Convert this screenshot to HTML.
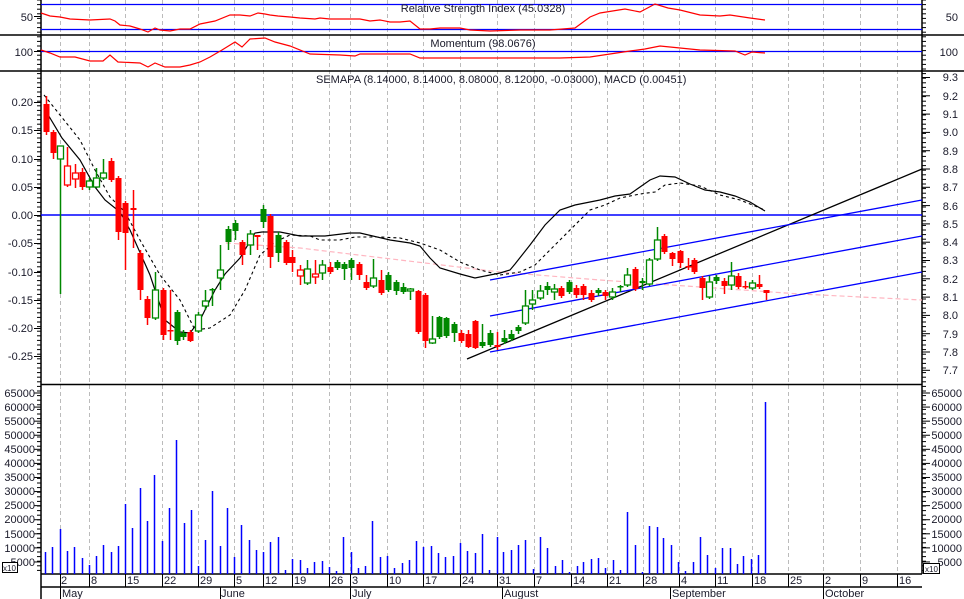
<!DOCTYPE html>
<html><head><meta charset="utf-8"><style>
html,body{margin:0;padding:0;background:#fff;width:964px;height:599px;overflow:hidden}
svg{display:block}
text{font-family:"Liberation Sans",sans-serif;font-size:11px;fill:#1a1a2a}
</style></head><body>
<svg id="s" width="964" height="599" xmlns="http://www.w3.org/2000/svg">
<g id="grid"></g>
<line x1="0" y1="35" x2="964" y2="35" stroke="#000" stroke-width="1.5"/>
<line x1="0" y1="71" x2="964" y2="71" stroke="#000" stroke-width="1.5"/>
<line x1="41" y1="384.5" x2="922" y2="384.5" stroke="#000" stroke-width="1.5"/>
<line x1="41" y1="574" x2="922" y2="574" stroke="#000" stroke-width="1.5"/>
<line x1="41" y1="587" x2="922" y2="587" stroke="#000" stroke-width="1.5"/>
<line x1="41" y1="0" x2="41" y2="599" stroke="#000" stroke-width="1.5"/>
<line x1="922" y1="0" x2="922" y2="574" stroke="#000" stroke-width="1.5"/>
<g id="ticks" stroke="#000" stroke-width="1"></g>
<line x1="41" y1="4.5" x2="922" y2="4.5" stroke="#00f" stroke-width="1.2"/>
<line x1="41" y1="29.5" x2="922" y2="29.5" stroke="#00f" stroke-width="1.2"/>
<line x1="41" y1="51.5" x2="922" y2="51.5" stroke="#00f" stroke-width="1.2"/>
<line x1="41" y1="215" x2="922" y2="215" stroke="#00f" stroke-width="1.5"/>
<polyline fill="none" stroke="#f00" stroke-width="1.2" points="41,13 50,16 60,17 70,19 90,20 110,19 115,21 120,25 130,26 140,29 148,32 155,28 160,30 170,31 180,29 190,29 200,24 215,21 230,15 240,15 250,16 258,13 265,14 270,15 278,16 290,17 300,18 315,19 320,18 330,19 360,19 370,21 380,20 390,22 400,22 410,21 420,29 430,29 440,28 460,28 470,30 490,31 520,30 550,30 575,28 590,17 600,13 625,9 640,12 655,4 668,8 680,10 700,15 720,16 730,15 750,18 765,20"/>
<polyline fill="none" stroke="#f00" stroke-width="1.2" points="41,50 50,53 60,57 75,57 90,61 103,61 110,55 118,62 140,63 148,67 155,63 165,67 180,67 190,65 200,62 210,57 222,50 235,42 242,47 250,39 265,38 275,42 290,46 310,54 340,55 355,56 360,54 380,54 410,54 420,58 440,58 470,58 500,58 530,58 560,58 590,57 610,54 630,51 645,49 660,46 680,48 700,50 735,51 745,55 752,52 765,53"/>
<polyline fill="none" stroke="#ffb6c1" stroke-width="1.2" stroke-dasharray="5,3" points="226,243 300,248 400,260 500,272 600,280 700,287 800,294 922,300"/>
<polyline fill="none" stroke="#000" stroke-width="1.2" points="44,108 62,138 80,160 95,187 105,200 120,212 130,230 150,275 165,320 180,332 190,333 200,320 215,290 225,274 240,258 255,233 262,232 280,232 300,236 325,236 350,233 360,233 390,240 410,243 420,246 430,258 440,268 460,274 475,278 500,273 510,270 515,264 530,245 545,225 560,210 575,205 600,200 615,196 630,194 650,180 660,176 675,177 690,184 705,190 720,192 735,196 750,202 765,211"/>
<polyline fill="none" stroke="#000" stroke-width="1.1" stroke-dasharray="3,3" points="44,95 60,115 80,140 95,170 110,197 125,212 140,240 160,275 180,300 195,330 210,328 230,315 245,290 260,255 275,242 290,235 310,236 320,240 340,240 355,237 380,237 400,238 420,243 440,250 460,262 480,270 500,275 520,272 535,265 545,255 560,240 575,225 590,210 605,205 620,198 640,194 655,192 665,185 680,183 700,186 720,195 740,200 765,210"/>
<line x1="467" y1="359" x2="922" y2="169" stroke="#000" stroke-width="1.3"/>
<line x1="490" y1="280" x2="922" y2="200" stroke="#00f" stroke-width="1.3"/>
<line x1="490" y1="316" x2="922" y2="236" stroke="#00f" stroke-width="1.3"/>
<line x1="490" y1="352" x2="922" y2="272" stroke="#00f" stroke-width="1.3"/>
<g id="candles"></g>
<g id="vol" stroke="#00f" stroke-width="1.5"></g>
<text x="483" y="12" text-anchor="middle">Relative Strength Index (45.0328)</text>
<text x="483" y="47" text-anchor="middle">Momentum (98.0676)</text>
<text x="316" y="83">SEMAPA (8.14000, 8.14000, 8.08000, 8.12000, -0.03000), MACD (0.00451)</text>
<g text-anchor="end">
<text x="33" y="21">50</text><text x="33" y="56">100</text>
<text x="33" y="106">0.20</text><text x="33" y="134">0.15</text><text x="33" y="163">0.10</text><text x="33" y="191">0.05</text><text x="33" y="219">0.00</text><text x="33" y="247">-0.05</text><text x="33" y="276">-0.10</text><text x="33" y="304">-0.15</text><text x="33" y="332">-0.20</text><text x="33" y="360">-0.25</text>
<text x="35" y="397">65000</text><text x="35" y="411">60000</text><text x="35" y="425">55000</text><text x="35" y="439">50000</text><text x="35" y="453">45000</text><text x="35" y="467">40000</text><text x="35" y="481">35000</text><text x="35" y="495">30000</text><text x="35" y="509">25000</text><text x="35" y="523">20000</text><text x="35" y="538">15000</text><text x="35" y="552">10000</text><text x="35" y="566">5000</text>
</g>
<g text-anchor="end">
<text x="958" y="21">50</text><text x="958" y="56">100</text>
<text x="958" y="81">9.3</text><text x="958" y="100">9.2</text><text x="958" y="118">9.1</text><text x="958" y="136">9.0</text><text x="958" y="155">8.9</text><text x="958" y="173">8.8</text><text x="958" y="191">8.7</text><text x="958" y="210">8.6</text><text x="958" y="228">8.5</text><text x="958" y="246">8.4</text><text x="958" y="264">8.3</text><text x="958" y="283">8.2</text><text x="958" y="301">8.1</text><text x="958" y="319">8.0</text><text x="958" y="338">7.9</text><text x="958" y="356">7.8</text><text x="958" y="374">7.7</text>
<text x="962" y="397">65000</text><text x="962" y="411">60000</text><text x="962" y="425">55000</text><text x="962" y="439">50000</text><text x="962" y="453">45000</text><text x="962" y="467">40000</text><text x="962" y="481">35000</text><text x="962" y="495">30000</text><text x="962" y="509">25000</text><text x="962" y="523">20000</text><text x="962" y="538">15000</text><text x="962" y="552">10000</text><text x="962" y="566">5000</text>
</g>
<rect x="2.5" y="562.5" width="15" height="10" fill="#fff" stroke="#000"/><text x="3" y="571" style="font-size:8px">x10</text>
<rect x="923.5" y="563.5" width="16" height="10" fill="#fff" stroke="#000"/><text x="925" y="572" style="font-size:8px">x10</text>
<g>
<text x="61" y="584">2</text><text x="91" y="584">8</text><text x="127" y="584">15</text><text x="164" y="584">22</text><text x="200" y="584">29</text><text x="236" y="584">5</text><text x="265" y="584">12</text><text x="294" y="584">19</text><text x="331" y="584">26</text><text x="352" y="584">3</text><text x="389" y="584">10</text><text x="425" y="584">17</text><text x="462" y="584">24</text><text x="499" y="584">31</text><text x="536" y="584">7</text><text x="573" y="584">14</text><text x="609" y="584">21</text><text x="645" y="584">28</text><text x="681" y="584">4</text><text x="717" y="584">11</text><text x="754" y="584">18</text><text x="790" y="584">25</text><text x="825" y="584">2</text><text x="862" y="584">9</text><text x="899" y="584">16</text>
<text x="62" y="597">May</text><text x="221" y="597">June</text><text x="352" y="597">July</text><text x="504" y="597">August</text><text x="672" y="597">September</text><text x="825" y="597">October</text>
</g>
</svg>
<script>
var NS="http://www.w3.org/2000/svg";
function el(p,t,a){var e=document.createElementNS(NS,t);for(var k in a)e.setAttribute(k,a[k]);document.getElementById(p).appendChild(e);return e;}
var gx=[60,89,125,162,198,234,263,292,329,350,387,423,460,497,534,571,607,643,679,715,752,788,823,860,897];
gx.forEach(function(x){el("grid","line",{x1:x+.5,y1:0,x2:x+.5,y2:574,stroke:"#bbb","stroke-dasharray":"4,3"});
el("ticks","line",{x1:x+.5,y1:574,x2:x+.5,y2:587});});
[60,220,350,502,670,823].forEach(function(x){el("ticks","line",{x1:x+.5,y1:587,x2:x+.5,y2:599});});
for(var y=0;y<574;y+=4.6){el("ticks","line",{x1:37,y1:y,x2:41,y2:y});el("ticks","line",{x1:922,y1:y,x2:926,y2:y});}
[16,51,102,130,159,187,215,243,272,300,328,356].forEach(function(y){el("ticks","line",{x1:34,y1:y+.5,x2:41,y2:y+.5});});
for(var y=77;y<383;y+=18.3)el("ticks","line",{x1:922,y1:y+.5,x2:930,y2:y+.5});
for(var y=393;y<570;y+=14.08){el("ticks","line",{x1:34,y1:y,x2:41,y2:y});el("ticks","line",{x1:922,y1:y,x2:930,y2:y});}
var C=[[46,104,132,96,135,"r"],[53,132,153,130,159,"r"],[60,146,159,146,294,"gh"],[67,166,185,147,187,"rh"],[75,173,179,164,188,"rh"],[82,172,187,168,190,"r"],[89,181,187,178,190,"gh"],[96,178,187,168,188,"gh"],[103,173,178,159,180,"gh"],[111,161,180,158,182,"r"],[118,178,232,176,240,"r"],[125,203,233,201,270,"r"],[133,208,210,190,248,"r"],[140,253,290,250,300,"r"],[147,299,318,296,325,"r"],[155,290,318,272,320,"gh"],[163,290,335,288,340,"r"],[170,330,331,290,340,"r"],[177,312,341,310,345,"g"],[183,333,337,330,340,"g"],[190,332,341,330,342,"r"],[198,315,331,312,333,"gh"],[205,301,306,290,310,"gh"],[212,289,290,288,306,"g"],[220,270,278,245,290,"gh"],[228,229,242,226,250,"g"],[235,223,231,220,240,"g"],[242,242,255,240,265,"r"],[250,234,245,230,255,"gh"],[257,235,237,235,250,"r"],[263,209,222,205,228,"g"],[270,216,257,214,268,"r"],[278,235,253,232,262,"g"],[286,242,263,240,265,"r"],[292,257,263,250,272,"r"],[300,270,276,265,285,"rh"],[307,269,283,260,285,"gh"],[315,274,277,260,284,"rh"],[322,265,273,260,280,"gh"],[330,267,272,262,274,"r"],[337,262,268,260,270,"g"],[344,264,269,262,280,"g"],[351,260,268,258,280,"g"],[359,264,275,262,280,"r"],[366,282,288,275,290,"r"],[373,278,286,259,288,"gh"],[381,280,293,270,295,"r"],[388,275,290,272,292,"g"],[396,282,291,280,295,"g"],[403,287,292,283,294,"g"],[410,289,291,288,300,"gh"],[418,291,332,290,334,"r"],[425,295,341,293,348,"r"],[432,339,343,316,344,"gh"],[439,317,337,316,339,"g"],[446,318,336,317,338,"g"],[454,324,333,322,342,"g"],[461,333,341,330,343,"r"],[468,334,347,330,348,"r"],[475,321,348,320,349,"r"],[482,342,346,324,348,"g"],[490,333,345,330,347,"g"],[497,345,347,332,350,"r"],[504,338,342,330,344,"g"],[511,334,339,330,341,"g"],[518,327,331,325,334,"g"],[525,306,323,290,325,"gh"],[532,300,304,290,310,"gh"],[540,291,298,285,300,"gh"],[547,286,290,282,295,"g"],[554,289,292,284,300,"gh"],[561,288,296,286,298,"r"],[569,282,292,280,294,"g"],[576,288,295,285,298,"r"],[583,286,295,284,300,"r"],[591,293,300,290,302,"r"],[598,290,293,288,296,"g"],[605,292,296,290,300,"r"],[612,292,297,288,300,"gh"],[620,286,287,285,292,"g"],[627,275,285,268,287,"gh"],[635,269,289,267,291,"r"],[642,281,283,278,290,"g"],[649,260,284,258,286,"gh"],[657,240,259,227,261,"gh"],[664,236,252,234,254,"r"],[672,253,259,252,266,"r"],[680,251,263,250,268,"r"],[688,266,267,258,270,"r"],[694,260,272,258,274,"r"],[702,278,288,276,300,"r"],[709,282,297,276,299,"gh"],[716,277,281,275,284,"g"],[724,281,286,278,294,"r"],[731,276,285,262,290,"gh"],[738,276,287,273,289,"r"],[745,286,287,281,289,"r"],[752,283,288,280,290,"gh"],[759,284,287,275,289,"r"],[766,290,293,290,300,"r"]];
C.forEach(function(c){var col=c[5][0]=="r"?"#f00":"#080";var hollow=c[5].length>1;
el("candles","line",{x1:c[0]+.5,y1:c[3],x2:c[0]+.5,y2:c[4],stroke:col,"stroke-width":1.5});
var h=Math.max(c[2]-c[1],1.5);
if(hollow)el("candles","rect",{x:c[0]-2.5,y:c[1],width:6,height:h,fill:"#fff",stroke:col,"stroke-width":1.3});
else el("candles","rect",{x:c[0]-2.5,y:c[1],width:6,height:h,fill:col});});
var V=[[45,552],[52,547],[60,529],[67,551],[74,547],[82,558],[89,565],[96,556],[103,545],[111,552],[118,546],[125,504],[132,528],[140,488],[147,521],[154,475],[162,541],[169,508],[176,440],[184,523],[191,510],[198,566],[205,540],[212,491],[220,546],[227,508],[234,557],[241,525],[249,540],[256,550],[263,552],[270,542],[278,537],[285,570],[292,559],[300,560],[307,568],[314,562],[322,561],[329,567],[336,571],[343,537],[351,552],[358,568],[365,566],[372,521],[380,557],[387,556],[394,568],[402,563],[409,560],[416,541],[423,547],[431,546],[438,553],[445,557],[453,556],[460,543],[467,551],[475,553],[482,534],[489,570],[497,537],[503,552],[511,550],[518,545],[525,540],[533,569],[540,537],[547,548],[555,566],[562,560],[569,572],[577,566],[583,562],[591,559],[598,558],[605,568],[613,560],[620,570],[627,512],[635,545],[642,572],[649,526],[657,527],[663,538],[671,545],[678,562],[685,571],[693,562],[700,537],[707,555],[715,568],[722,548],[730,548],[737,564],[743,556],[751,559],[758,555],[765,402]];
V.forEach(function(v){el("vol","line",{x1:v[0]+.5,y1:v[1],x2:v[0]+.5,y2:574});});
</script>
</body></html>
